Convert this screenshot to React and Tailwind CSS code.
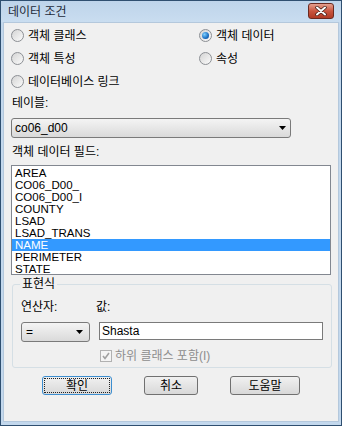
import React from 'react';

const fields = ['AREA', 'CO06_D00_', 'CO06_D00_I', 'COUNTY', 'LSAD', 'LSAD_TRANS', 'NAME', 'PERIMETER', 'STATE'];

const Radio = ({ checked, label }) => (
    <div className="flex items-center h-[23px]">
        <div className="w-[13px] h-[13px] rounded-full border border-[#8c8f94] bg-gradient-to-br from-[#d4d4d4] to-[#fbfbfb] flex items-center justify-center">
            {checked && (
                <div className="w-[7px] h-[7px] rounded-full bg-[radial-gradient(circle_at_35%_35%,#7fd0ff,#1b6fc2_60%,#0b3f86)]" />
            )}
        </div>
        <span className="ml-[4px] text-[12px] leading-[14px] text-black">{label}</span>
    </div>
);

const DropArrow = () => (
    <svg width="7" height="4" viewBox="0 0 7 4" className="shrink-0">
        <path d="M0 0 H7 L3.5 4 Z" fill="#000" />
    </svg>
);

const App = () => {
    return (
        <div className="w-[342px] h-[426px] border border-[#2f4f70] bg-[#c3d8ed] flex flex-col font-['Liberation_Sans','Noto_Sans_CJK_KR',sans-serif] select-none">
            {/* Title bar */}
            <div className="h-[21px] flex items-center justify-between pl-[7px] pr-[7px] shrink-0 bg-gradient-to-b from-[#bed4ea] to-[#c9ddf0]">
                <span className="text-[12px] leading-[14px] text-[#1d2a3a]">데이터 조건</span>
                <div className="w-[26px] h-[16px] mt-[-1px] rounded-[3px] border border-[#6b2a20] bg-gradient-to-b from-[#e4a08f] via-[#c9553f] to-[#b03a24] flex items-center justify-center">
                    <svg width="12" height="10" viewBox="0 0 12 10">
                        <path d="M2 1.5 L10 8.5 M10 1.5 L2 8.5" stroke="#3a1a14" strokeWidth="3.4" strokeLinecap="round" />
                        <path d="M2 1.5 L10 8.5 M10 1.5 L2 8.5" stroke="#fff" strokeWidth="2" strokeLinecap="round" />
                    </svg>
                </div>
            </div>

            {/* Body */}
            <div className="flex-1 mx-[2px] mb-[3px] bg-[#f0f0f0] border border-[#b4c8dc] flex flex-col pt-[1px]">
                <div className="grid grid-cols-[188px_1fr] pl-[7px]">
                    <Radio label="객체 클래스" />
                    <Radio label="객체 데이터" checked />
                    <Radio label="객체 특성" />
                    <Radio label="속성" />
                    <Radio label="데이터베이스 링크" />
                </div>

                <div className="h-[16px] flex items-center pl-[8px] mt-[2px] text-[12px] leading-[14px]">테이블:</div>
                <div className="ml-[7px] w-[280px] h-[20px] mt-[7px] rounded-[3px] border border-[#7a7a7a] bg-gradient-to-b from-[#f4f4f4] to-[#dadada] flex items-center justify-between pl-[3px] pr-[4px]">
                    <span className="text-[12px] leading-[14px]">co06_d00</span>
                    <DropArrow />
                </div>

                <div className="h-[16px] flex items-center pl-[8px] mt-[6px] text-[12px] leading-[14px]">객체 데이터 필드:</div>
                <div className="ml-[7px] mr-[7px] mt-[5px] h-[110px] border border-[#828790] bg-white py-[1px]">
                    {fields.map((f) => (
                        <div
                            key={f}
                            className={`h-[12px] overflow-hidden text-[11.5px] leading-[12px] pl-[3px] ${f === 'NAME' ? 'bg-[#3399ff] text-white' : 'text-black'}`}
                        >
                            {f}
                        </div>
                    ))}
                </div>

                {/* Expression group */}
                <fieldset className="mx-[8px] mt-[1px] border border-[#d5dfe5] rounded-[3px] px-[8px] pb-[4px]">
                    <legend className="ml-[-1px] px-[2px] text-[12px] leading-[16px]">표현식</legend>
                    <div className="flex h-[16px] items-center mt-[7px] text-[12px] leading-[14px]">
                        <span className="w-[75px]">연산자:</span>
                        <span>값:</span>
                    </div>
                    <div className="flex items-start mt-[7px]">
                        <div className="w-[69px] h-[20px] rounded-[3px] border border-[#7a7a7a] bg-gradient-to-b from-[#f4f4f4] to-[#dadada] flex items-center justify-between pl-[4px] pr-[6px]">
                            <span className="text-[12px] leading-[14px]">=</span>
                            <DropArrow />
                        </div>
                        <div className="ml-[9px] w-[224px] h-[18px] border border-[#7a7a7a] bg-white flex items-center pl-[2px]">
                            <span className="text-[12px] leading-[14px]">Shasta</span>
                        </div>
                    </div>
                    <div className="flex items-center h-[14px] mt-[7px] pl-[79px]">
                        <div className="w-[12px] h-[12px] border border-[#b1b1b1] bg-[#f4f4f4] flex items-center justify-center">
                            <svg width="8" height="8" viewBox="0 0 8 8">
                                <path d="M1 4 L3 6.5 L7 1" stroke="#a0a0a0" strokeWidth="1.6" fill="none" />
                            </svg>
                        </div>
                        <span className="ml-[3px] text-[12px] leading-[14px] text-[#8d8d8d]">하위 클래스 포함(I)</span>
                    </div>
                </fieldset>

                {/* Buttons */}
                <div className="flex mt-[8px] h-[19px]">
                    <div className="ml-[38px] w-[70px] h-[19px] rounded-[3px] border border-[#3c8ed0] p-[1px] bg-gradient-to-b from-[#f1f1f1] to-[#d8d8d8]">
                        <div className="w-full h-full border border-dotted border-[#222] flex items-center justify-center text-[12px] leading-[14px]">확인</div>
                    </div>
                    <div className="ml-[32px] w-[54px] h-[19px] rounded-[3px] border border-[#707070] bg-gradient-to-b from-[#f1f1f1] to-[#d8d8d8] flex items-center justify-center text-[12px] leading-[14px]">취소</div>
                    <div className="ml-[32px] w-[70px] h-[19px] rounded-[3px] border border-[#707070] bg-gradient-to-b from-[#f1f1f1] to-[#d8d8d8] flex items-center justify-center text-[12px] leading-[14px]">도움말</div>
                </div>
            </div>
        </div>
    );
};

export default App;
